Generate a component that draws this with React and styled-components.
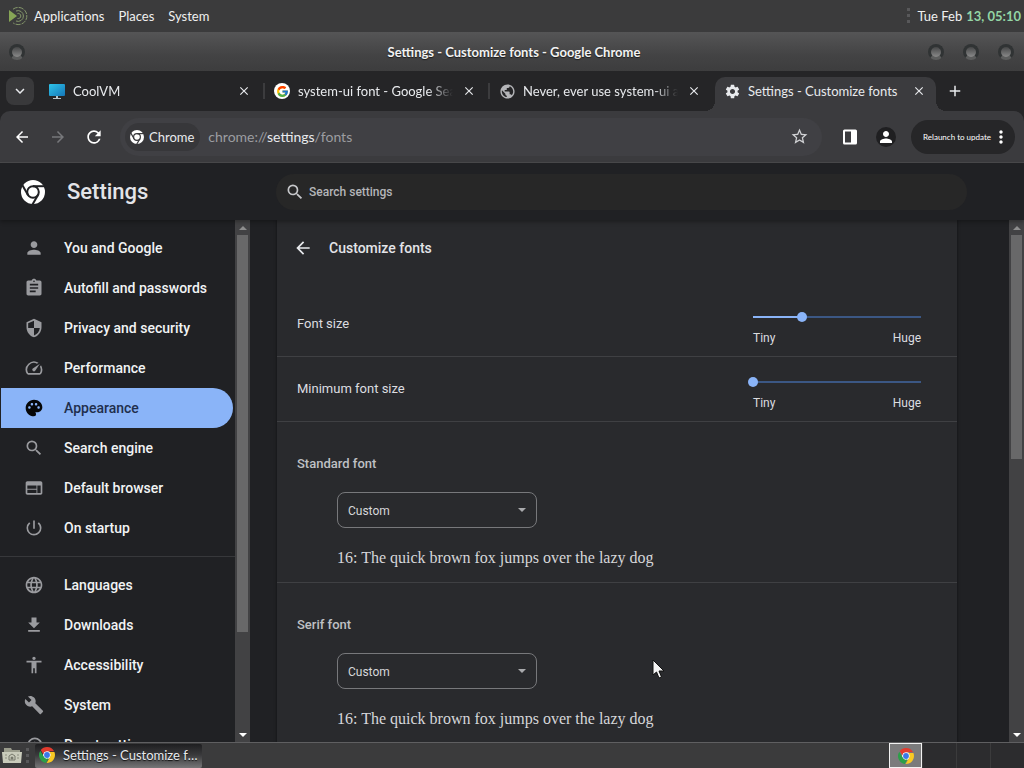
import React, { useId, useState } from "react";
import styled, { createGlobalStyle, css } from "styled-components";
import {
  MdPerson,
  MdAssignment,
  MdSecurity,
  MdSpeed,
  MdPalette,
  MdSearch,
  MdWeb,
  MdPowerSettingsNew,
  MdLanguage,
  MdFileDownload,
  MdAccessibility,
  MdBuild,
  MdRestore,
  MdPublic,
  MdSettings,
  MdClose,
  MdAdd,
  MdArrowBack,
  MdArrowForward,
  MdRefresh,
  MdExpandMore,
  MdStarBorder,
  MdMoreVert,
} from "react-icons/md";
import { FcGoogle } from "react-icons/fc";

const mainLinks = [
  { label: "You and Google", icon: MdPerson },
  { label: "Autofill and passwords", icon: MdAssignment },
  { label: "Privacy and security", icon: MdSecurity },
  { label: "Performance", icon: MdSpeed },
  { label: "Appearance", icon: MdPalette },
  { label: "Search engine", icon: MdSearch },
  { label: "Default browser", icon: MdWeb },
  { label: "On startup", icon: MdPowerSettingsNew },
];

const moreLinks = [
  { label: "Languages", icon: MdLanguage },
  { label: "Downloads", icon: MdFileDownload },
  { label: "Accessibility", icon: MdAccessibility },
  { label: "System", icon: MdBuild },
  { label: "Reset settings", icon: MdRestore },
];

const ChromeLogo = ({ size }) => (
  <svg width={size} height={size} viewBox="0 0 24 24" aria-hidden="true">
    <circle cx="12" cy="12" r="6" fill="#fff" />
    <path
      fill="#e33b2e"
      d="M12 0C8.21 0 4.831 1.757 2.632 4.501l3.953 6.848A5.454 5.454 0 0 1 12 6.545h10.691A12 12 0 0 0 12 0z"
    />
    <path
      fill="#2b9f48"
      d="M1.931 5.47A11.943 11.943 0 0 0 0 12c0 6.012 4.42 10.991 10.189 11.864l3.953-6.847a5.45 5.45 0 0 1-6.865-2.29z"
    />
    <path
      fill="#f9c923"
      d="M15.273 7.636a5.446 5.446 0 0 1 1.45 7.091l-5.344 9.257c.206.01.413.016.621.016 6.627 0 12-5.373 12-12 0-1.54-.29-3.011-.818-4.364z"
    />
    <circle cx="12" cy="12" r="4.364" fill="#3b78e7" />
  </svg>
);

const ChromeMark = ({ size }) => {
  const id = useId();

  return (
    <svg width={size} height={size} viewBox="0 0 24 24" aria-hidden="true">
      <mask id={id}>
        <circle cx="12" cy="12" r="12" fill="#fff" />
        <g stroke="#000" strokeWidth="2" fill="none">
          <circle cx="12" cy="12" r="5.800" />
          <path d="M12 6.200h12" />
          <path d="M12 6.200h12" transform="rotate(120 12 12)" />
          <path d="M12 6.200h12" transform="rotate(240 12 12)" />
        </g>
      </mask>
      <rect width="24" height="24" fill="#fff" mask={`url(#${id})`} />
    </svg>
  );
};

const MateLogo = () => (
  <svg width="20" height="20" viewBox="0 0 20 20" fill="none" aria-hidden="true">
    <path d="M1 4l8 6-8 6z" fill="#87a556" />
    <path d="M5 3.2A8.6 8.6 0 1 1 5 16.8" stroke="#84966a" strokeWidth="1" strokeDasharray="5 1" />
    <path d="M8 5a5.4 5.4 0 1 1 0 10" stroke="#84966a" strokeWidth="1" />
    <path d="M9.500 7.500a2.600 2.600 0 1 1 0 5" stroke="#84966a" strokeWidth="1" />
  </svg>
);

const MonitorIcon = () => (
  <svg width="16" height="16" viewBox="0 0 16 16" aria-hidden="true">
    <defs>
      <linearGradient id="screen" x1="0" y1="0" x2="1" y2="1">
        <stop offset="0" stopColor="#2ec4ea" />
        <stop offset="1" stopColor="#1576b8" />
      </linearGradient>
    </defs>
    <rect x="0" y="1" width="16" height="12" rx="1" fill="url(#screen)" />
    <path d="M7 13h2v2h3v1H4v-1h3z" fill="#b9c4ca" />
  </svg>
);

const FolderIcon = () => (
  <svg width="20" height="18" viewBox="0 0 20 18" aria-hidden="true">
    <path d="M2 1h7l1 2h8v12H2z" fill="#9a9c8c" />
    <path d="M0 5h20l-1 11H1z" fill="#c9cbbb" />
    <path d="M7 13V9l3-2 3 2v4z" fill="none" stroke="#77796c" strokeWidth="1" />
    <circle cx="10" cy="11" r="1.500" fill="#77796c" />
    <path d="M3 8h2M3 11h2M15 8h2M15 11h2" stroke="#8d8f80" />
  </svg>
);

const SidePanelIcon = () => (
  <svg width="16" height="16" viewBox="0 0 16 16" aria-hidden="true">
    <path
      d="M2.500.5h11A1.500 1.500 0 0 1 15 2v12a1.500 1.500 0 0 1-1.500 1.500h-11A1.500 1.500 0 0 1 1 14V2A1.500 1.500 0 0 1 2.500.5zM3 2.500v11h6v-11z"
      fill="#fff"
      fillRule="evenodd"
    />
  </svg>
);

const Arrow = ({ up, color }) => (
  <svg width="8" height="4" viewBox="0 0 8 4" aria-hidden="true">
    <path d={up ? "M0 4l4-4 4 4z" : "M0 0h8L4 4z"} fill={color} />
  </svg>
);

const ScrollBar = ({ thumb, rest }) => (
  <ScrollTrack>
    <ScrollEnd>
      <Arrow up color="#8e8e8e" />
    </ScrollEnd>
    <ScrollThumb $grow={thumb} />
    <ScrollRest $grow={rest} />
    <ScrollEnd>
      <Arrow color="#fff" />
    </ScrollEnd>
  </ScrollTrack>
);

const BrowserTab = ({ icon, title, active, divider }) => (
  <Tab $active={active} $divider={divider} role="tab" aria-selected={!!active}>
    <TabIcon>{icon}</TabIcon>
    <TabTitle $fade={!active}>{title}</TabTitle>
    <TabClose aria-label={`Close ${title}`}>
      <MdClose size={14} />
    </TabClose>
  </Tab>
);

const SizeRow = ({ id, label, initial }) => {
  const [value, setValue] = useState(initial);

  return (
    <Row>
      <label htmlFor={id}>{label}</label>
      <SliderBox>
        <Slider
          id={id}
          type="range"
          min="0"
          max="24"
          value={value}
          style={{ "--fill": value / 24 }}
          onChange={(e) => setValue(Number(e.target.value))}
        />
        <SliderLabels>
          <span>Tiny</span>
          <span>Huge</span>
        </SliderLabels>
      </SliderBox>
    </Row>
  );
};

const FontSection = ({ id, label }) => (
  <Section>
    <SectionTitle htmlFor={id}>{label}</SectionTitle>
    <SelectBox>
      <Select id={id} defaultValue="Custom">
        <option>Custom</option>
      </Select>
      <SelectArrow>
        <Arrow color="#a9aaad" />
      </SelectArrow>
    </SelectBox>
    <Sample>16: The quick brown fox jumps over the lazy dog</Sample>
  </Section>
);

const App = () => {
  const [selected, setSelected] = useState("Appearance");

  const renderLink = ({ label, icon: Icon }) => (
    <NavLink
      key={label}
      href="#"
      $selected={label === selected}
      onClick={(e) => {
        e.preventDefault();
        setSelected(label);
      }}
    >
      <Icon size={20} />
      {label}
    </NavLink>
  );

  return (
    <Desktop>
      <GlobalStyle />
      <MenuBar>
        <MateLogo />
        <MenuButton>Applications</MenuButton>
        <MenuButton>Places</MenuButton>
        <MenuButton>System</MenuButton>
        <Clock>
          <Grip />
          Tue Feb <ClockTime>13, 05:10</ClockTime>
        </Clock>
      </MenuBar>

      <TitleBar>
        <WindowButton aria-label="Window menu" />
        <WindowTitle>Settings - Customize fonts - Google Chrome</WindowTitle>
        <WindowButtons>
          <WindowButton aria-label="Minimize" />
          <WindowButton aria-label="Maximize" />
          <WindowButton aria-label="Close window" />
        </WindowButtons>
      </TitleBar>

      <TabStrip>
        <TabSearch aria-label="Search tabs">
          <MdExpandMore size={18} />
        </TabSearch>
        <TabList role="tablist">
          <BrowserTab icon={<MonitorIcon />} title="CoolVM" divider />
          <BrowserTab
            icon={
              <GoogleBadge>
                <FcGoogle size={13} />
              </GoogleBadge>
            }
            title="system-ui font - Google Search"
            divider
          />
          <BrowserTab
            icon={<MdPublic size={17} color="#b4b5b8" />}
            title="Never, ever use system-ui as the value"
          />
          <BrowserTab icon={<MdSettings size={17} />} title="Settings - Customize fonts" active />
        </TabList>
        <NewTab aria-label="New tab">
          <MdAdd size={18} />
        </NewTab>
      </TabStrip>

      <ToolbarBack>
        <Toolbar>
          <ToolButton aria-label="Back">
            <MdArrowBack size={18} />
          </ToolButton>
          <ToolButton aria-label="Forward" disabled>
            <MdArrowForward size={18} />
          </ToolButton>
          <ToolButton aria-label="Reload">
            <MdRefresh size={20} />
          </ToolButton>
          <Omnibox>
            <SiteChip>
              <ChromeMark size={14} />
              Chrome
            </SiteChip>
            <Address>
              chrome://<b>settings</b>/fonts
            </Address>
            <StarButton aria-label="Bookmark this tab">
              <MdStarBorder size={19} />
            </StarButton>
          </Omnibox>
          <ToolButton aria-label="Side panel">
            <SidePanelIcon />
          </ToolButton>
          <ToolButton aria-label="Profile">
            <Avatar>
              <MdPerson size={18} />
            </Avatar>
          </ToolButton>
          <Relaunch>
            Relaunch to update
            <MdMoreVert size={20} />
          </Relaunch>
        </Toolbar>
      </ToolbarBack>

      <PageHeader>
        <Brand>
          <ChromeMark size={24} />
          <h1>Settings</h1>
        </Brand>
        <SearchArea>
          <MdSearch size={20} />
          <SearchInput type="text" placeholder="Search settings" aria-label="Search settings" />
        </SearchArea>
      </PageHeader>

      <Page>
        <Sidebar>
          {mainLinks.map(renderLink)}
          <Divider />
          {moreLinks.map(renderLink)}
        </Sidebar>
        <ScrollBar thumb={397} rest={95} />
        <Main>
          <Card>
            <CardHeader>
              <BackButton aria-label="Back to appearance">
                <MdArrowBack size={20} />
              </BackButton>
              <h2>Customize fonts</h2>
            </CardHeader>
            <SizeRow id="font-size" label="Font size" initial={7} />
            <SizeRow id="min-size" label="Minimum font size" initial={0} />
            <FontSection id="standard" label="Standard font" />
            <FontSection id="serif" label="Serif font" />
          </Card>
        </Main>
        <ScrollBar thumb={224} rest={268} />
      </Page>

      <TaskBar>
        <ShowFiles aria-label="Files">
          <FolderIcon />
        </ShowFiles>
        <Grip />
        <TaskButton>
          <ChromeLogo size={16} />
          <span>Settings - Customize fonts</span>
        </TaskButton>
        <Workspaces>
          <Workspace aria-label="Workspace 1" $current>
            <ChromeLogo size={16} />
          </Workspace>
          <Workspace aria-label="Workspace 2" />
          <Workspace aria-label="Workspace 3" />
          <Workspace aria-label="Workspace 4" />
        </Workspaces>
      </TaskBar>

      <Pointer width="14" height="20" viewBox="0 0 14 20" aria-hidden="true">
        <path d="M1 1v15l3.500-3 2.500 6 2.500-1-2.500-6h5z" fill="#f4f4f4" stroke="#111" />
      </Pointer>
    </Desktop>
  );
};

export default App;

const GlobalStyle = createGlobalStyle`
  * {
    box-sizing: border-box;
  }

  body {
    margin: 0;
    background-color: #202124;
  }

  button {
    padding: 0;
    border: none;
    background: none;
    color: inherit;
    font: inherit;
  }

  svg {
    flex-shrink: 0;
  }
`;

const Desktop = styled.div`
  display: flex;
  flex-direction: column;
  height: 100vh;
  overflow: hidden;
  background-color: #202124;
  color: #e8eaed;
  font-family: Lato, "Liberation Sans", sans-serif;
  font-size: 13px;
`;

const MenuBar = styled.header`
  display: flex;
  align-items: center;
  flex-shrink: 0;
  gap: 14px;
  height: 32px;
  padding: 0 3px 0 8px;
  background-color: #3b3b3c;
  color: #f0f0f0;

  > svg {
    margin-right: -8px;
  }
`;

const MenuButton = styled.button`
  white-space: nowrap;
`;

const Clock = styled.div`
  display: flex;
  align-items: center;
  gap: 4px;
  margin-left: auto;
  white-space: nowrap;
`;

const ClockTime = styled.span`
  color: #93d5a5;
  font-weight: bold;
`;

const Grip = styled.span`
  width: 3px;
  height: 16px;
  margin: 0 4px;
  background: repeating-linear-gradient(#58585a 0 3px, transparent 3px 6px);
`;

const TitleBar = styled.div`
  display: flex;
  align-items: center;
  justify-content: space-between;
  flex-shrink: 0;
  height: 39px;
  padding: 0 10px 0 9px;
  background: linear-gradient(#555556, #434344 60%, #3d3d3e);
`;

const WindowTitle = styled.span`
  flex: 1;
  padding-left: 75px;
  text-align: center;
  color: #f2f2f2;
  font-weight: bold;
  text-shadow: 0 1px 1px #1c1c1c;
`;

const WindowButtons = styled.div`
  display: flex;
  gap: 19px;
`;

const WindowButton = styled.button`
  width: 16px;
  height: 16px;
  border: 3px solid #303334;
  border-bottom-color: #5c5d5d;
  border-radius: 50%;
  background: linear-gradient(#454647, #8a8a8a);
`;

const TabStrip = styled.div`
  display: flex;
  align-items: center;
  flex-shrink: 0;
  height: 40px;
  padding: 0 6px;
  background-color: #252527;
`;

const TabSearch = styled.button`
  display: flex;
  align-items: center;
  justify-content: center;
  width: 28px;
  height: 28px;
  border-radius: 8px;
  background-color: #39393b;
`;

const TabList = styled.div`
  display: flex;
  align-items: flex-end;
  flex: 0 1 906px;
  min-width: 0;
  height: 40px;
  padding-left: 6px;
`;

const Tab = styled.div`
  position: relative;
  display: flex;
  align-items: center;
  flex: 1;
  gap: 8px;
  min-width: 0;
  height: 34px;
  margin-right: 4px;
  padding: 0 9px 6px;
  border-radius: 10px 10px 0 0;
  background-color: ${(props) => (props.$active ? "#3b3b3e" : "transparent")};

  ${(props) =>
    props.$divider &&
    css`
      &::after {
        content: "";
        position: absolute;
        top: 6px;
        right: -4px;
        width: 2px;
        height: 16px;
        background-color: #3c3c3e;
      }
    `}

  ${(props) =>
    props.$active &&
    css`
      &::before,
      &::after {
        content: "";
        position: absolute;
        bottom: 0;
        width: 10px;
        height: 10px;
      }

      &::before {
        left: -10px;
        background: radial-gradient(circle at 0 0, transparent 10px, #3b3b3e 10px);
      }

      &::after {
        right: -10px;
        background: radial-gradient(circle at 100% 0, transparent 10px, #3b3b3e 10px);
      }
    `}
`;

const TabIcon = styled.span`
  display: flex;
  justify-content: center;
  width: 16px;
`;

const GoogleBadge = styled.span`
  display: flex;
  align-items: center;
  justify-content: center;
  width: 16px;
  height: 16px;
  flex-shrink: 0;
  border-radius: 50%;
  background-color: #fff;
`;

const TabTitle = styled.span`
  flex: 1;
  overflow: hidden;
  white-space: nowrap;
  mask-image: ${(props) =>
    props.$fade ? "linear-gradient(90deg, #000 calc(100% - 24px), transparent)" : "none"};
`;

const TabClose = styled.button`
  display: flex;
  align-items: center;
  justify-content: center;
  width: 16px;
  height: 16px;
`;

const NewTab = styled.button`
  display: flex;
  margin-left: 6px;
`;

const ToolbarBack = styled.div`
  flex-shrink: 0;
  background-color: #252527;
`;

const Toolbar = styled.div`
  display: flex;
  align-items: center;
  gap: 8px;
  height: 52px;
  padding: 0 9px 0 8px;
  border-bottom: 1px solid #4a4a4c;
  border-radius: 10px 10px 0 0;
  background-color: #3b3b3e;
`;

const ToolButton = styled.button`
  display: flex;
  align-items: center;
  justify-content: center;
  width: 28px;
  height: 28px;
  color: #fff;

  &:disabled {
    color: #77787b;
  }
`;

const Omnibox = styled.div`
  display: flex;
  align-items: center;
  flex: 1;
  height: 38px;
  margin: 0 6px 0 4px;
  padding: 0 13px 0 5px;
  border-radius: 19px;
  background-color: #404044;
`;

const SiteChip = styled.button`
  display: flex;
  align-items: center;
  gap: 5px;
  height: 28px;
  padding: 0 6px 0 5px;
  border-radius: 14px;
  background-color: #37373a;
`;

const Address = styled.span`
  flex: 1;
  margin-left: 8px;
  color: #9c9da1;
  font-size: 14px;

  b {
    color: #e8eaed;
    font-weight: normal;
  }
`;

const StarButton = styled.button`
  display: flex;
  color: #d0d1d4;
`;

const Avatar = styled.span`
  display: flex;
  align-items: center;
  justify-content: center;
  width: 20px;
  height: 20px;
  border-radius: 50%;
  background-color: #1f1f21;
`;

const Relaunch = styled.button`
  display: flex;
  align-items: center;
  height: 34px;
  margin-left: 3px;
  padding: 0 4px 0 12px;
  border-radius: 17px;
  background-color: #262628;
  color: #fff;
  font-size: 8px;
  white-space: nowrap;
`;

const PageHeader = styled.div`
  position: relative;
  display: flex;
  align-items: center;
  flex-shrink: 0;
  height: 57px;
  background-color: #202124;
  box-shadow: 0 2px 4px rgba(0, 0, 0, 0.3);
  font-family: Roboto, sans-serif;
`;

const Brand = styled.div`
  display: flex;
  align-items: center;
  gap: 22px;
  width: 276px;
  padding-left: 21px;
  color: #fff;

  h1 {
    margin: 0;
    color: #e3e4e8;
    font-size: 22px;
    font-weight: 500;
    line-height: 28px;
  }
`;

const SearchArea = styled.div`
  display: flex;
  align-items: center;
  flex: 1;
  gap: 4px;
  height: 36px;
  margin-right: 57px;
  padding: 0 9px;
  border-radius: 18px;
  background-color: #272727;
  color: #c6c7ca;
`;

const SearchInput = styled.input`
  flex: 1;
  padding: 0;
  border: none;
  outline: none;
  background: none;
  color: #e8eaed;
  font-family: Roboto, sans-serif;
  font-size: 12px;
  font-weight: 500;

  &::placeholder {
    color: #b4b5b8;
  }
`;

const Page = styled.div`
  display: flex;
  flex: 1;
  min-height: 0;
  font-family: Roboto, sans-serif;
`;

const Sidebar = styled.nav`
  width: 235px;
  padding: 8px 2px 0 1px;
  overflow: hidden;
`;

const NavLink = styled.a`
  display: flex;
  align-items: center;
  gap: 20px;
  height: 40px;
  padding-left: 23px;
  border-radius: 0 20px 20px 0;
  background-color: ${(props) => (props.$selected ? "#8ab4f8" : "transparent")};
  color: ${(props) => (props.$selected ? "#1f2f4d" : "#f1f3f4")};
  font-size: 14px;
  font-weight: 500;
  text-decoration: none;

  svg {
    color: ${(props) => (props.$selected ? "#060708" : "#9a9b9f")};
  }
`;

const Divider = styled.hr`
  height: 1px;
  margin: 8px -2px 8px -1px;
  border: none;
  background-color: #37383b;
`;

const ScrollTrack = styled.div`
  display: flex;
  flex-direction: column;
  width: 15px;
  background-color: #424244;
`;

const ScrollEnd = styled.div`
  display: flex;
  align-items: center;
  justify-content: center;
  height: 15px;
`;

const ScrollThumb = styled.div`
  flex: ${(props) => props.$grow};
  margin: 0 2px;
  background-color: #686869;
`;

const ScrollRest = styled.div`
  flex: ${(props) => props.$grow};
`;

const Main = styled.main`
  flex: 1;
  min-width: 0;
  padding: 0 52px 0 27px;
  overflow: hidden;
`;

const Card = styled.div`
  min-height: 100%;
  background-color: #292a2d;
  box-shadow: 0 0 3px rgba(0, 0, 0, 0.5);
`;

const CardHeader = styled.div`
  display: flex;
  align-items: center;
  gap: 16px;
  height: 56px;
  margin-bottom: 16px;
  padding: 0 16px;

  h2 {
    margin: 0;
    color: #e3e4e8;
    font-size: 14px;
    font-weight: 500;
  }
`;

const BackButton = styled.button`
  display: flex;
`;

const Row = styled.div`
  display: flex;
  align-items: center;
  justify-content: space-between;
  height: 64px;
  padding: 0 36px 0 20px;
  color: #dcdde0;
  font-size: 13px;

  & + & {
    height: 65px;
    border-top: 1px solid #3f4043;
  }

  label {
    padding-bottom: 2px;
  }
`;

const SliderBox = styled.div`
  width: 168px;
`;

const Slider = styled.input`
  display: block;
  width: 178px;
  height: 28px;
  margin: 0 -5px;
  appearance: none;
  background: none;

  &::-webkit-slider-runnable-track {
    height: 2px;
    background: linear-gradient(
      90deg,
      transparent 5px,
      #8ab4f8 5px,
      #8ab4f8 calc(5px + 168px * var(--fill)),
      #3b5784 calc(5px + 168px * var(--fill)),
      #3b5784 calc(100% - 5px),
      transparent calc(100% - 5px)
    );
  }

  &::-webkit-slider-thumb {
    width: 10px;
    height: 10px;
    margin-top: -4px;
    appearance: none;
    border-radius: 50%;
    background-color: #8ab4f8;
  }
`;

const SliderLabels = styled.div`
  display: flex;
  justify-content: space-between;
  font-size: 12px;
  line-height: 14px;
`;

const Section = styled.section`
  padding: 32px 20px 12px;
  border-top: 1px solid #3f4043;
`;

const SectionTitle = styled.label`
  display: block;
  color: #bfc0c4;
  font-size: 13px;
  font-weight: 500;
  line-height: 20px;
`;

const SelectBox = styled.div`
  position: relative;
  width: 200px;
  margin: 18px 0 18px 40px;
`;

const Select = styled.select`
  display: block;
  width: 100%;
  height: 36px;
  padding: 2px 10px 0;
  appearance: none;
  border: 1px solid #77787b;
  border-radius: 8px;
  background: none;
  color: #d6d7da;
  font-family: Roboto, sans-serif;
  font-size: 12px;
`;

const SelectArrow = styled.span`
  position: absolute;
  top: 0;
  right: 11px;
  display: flex;
  align-items: center;
  height: 36px;
  pointer-events: none;
`;

const Sample = styled.p`
  margin: 0 0 0 40px;
  color: #d6d7da;
  font-family: "Liberation Serif", serif;
  font-size: 16px;
  line-height: 24px;
`;

const TaskBar = styled.footer`
  display: flex;
  align-items: center;
  flex-shrink: 0;
  height: 26px;
  padding-left: 2px;
  border-top: 1px solid #5f5f61;
  background-color: #3b3b3c;
`;

const ShowFiles = styled.button`
  display: flex;
`;

const TaskButton = styled.button`
  display: flex;
  align-items: center;
  gap: 8px;
  width: 167px;
  height: 24px;
  margin-left: 2px;
  padding: 0 0 2px 4px;
  border-radius: 2px;
  background: linear-gradient(#1e1e20, #39393b 45%, #767677);
  text-shadow: 0 1px 1px #111;
  text-align: left;

  span {
    overflow: hidden;
    text-overflow: ellipsis;
    white-space: nowrap;
  }
`;

const Workspaces = styled.div`
  display: flex;
  gap: 1px;
  height: 25px;
  margin-left: auto;
  background-color: #3b3b3c;
`;

const Workspace = styled.button`
  display: flex;
  align-items: center;
  justify-content: center;
  width: 33px;
  height: 25px;
  border: ${(props) => (props.$current ? "1px solid #f2f2f2" : "none")};
  background-color: ${(props) => (props.$current ? "#7b7b7c" : "#2c2c2e")};
`;

/* mouse pointer resting over the page */
const Pointer = styled.svg`
  position: fixed;
  top: 659px;
  left: 652px;
  pointer-events: none;
`;
